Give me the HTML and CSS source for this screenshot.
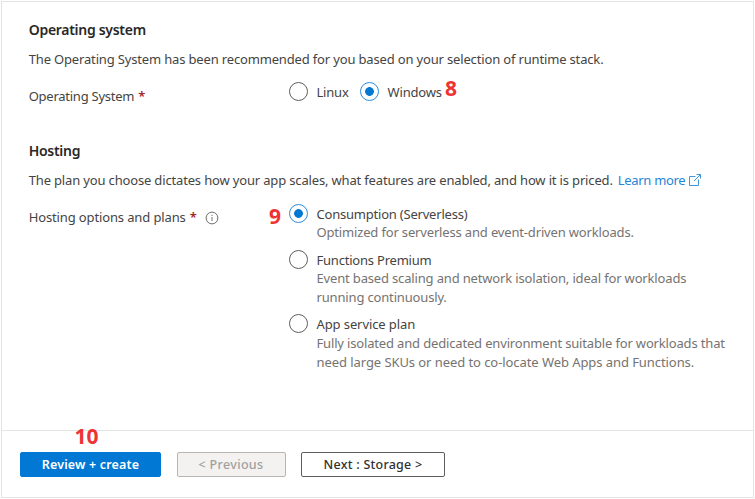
FILE: index.html
```
<!DOCTYPE html>
<html lang="en">
<head>
<meta charset="utf-8">
<title>Create Function App</title>
<link rel="stylesheet" href="styles.css">
</head>
<body>
<main class="panel">
  <div class="content">
    <section class="section section-os">
      <h2 class="heading">Operating system</h2>
      <p class="intro">The Operating System has been recommended for you based on your selection of runtime stack.</p>
      <div class="field">
        <div class="label os-label"><span class="label-text">Operating System</span><span class="required">*</span></div>
        <div class="radio-row">
          <div class="choice"><span class="radio"></span><span class="option">Linux</span></div>
          <div class="choice"><span class="radio checked"></span><span class="option">Windows</span><span class="step step-8">8</span></div>
        </div>
      </div>
    </section>
    <section class="section section-hosting">
      <h2 class="heading">Hosting</h2>
      <p class="intro"><span>The plan you choose dictates how your app scales, what features are enabled, and how it is priced.</span><a class="link"><span>Learn more</span><svg class="external" viewBox="0 0 12 12"><path d="M6.5 2.5h-6v9h9v-6M7.5.5h4v4M11.5.5l-6.5 6.5"/></svg></a></p>
      <div class="field">
        <div class="label host-label"><span class="label-text">Hosting options and plans</span><span class="required">*</span><svg class="info" viewBox="0 0 14 14"><circle cx="7" cy="7" r="5.9"/><path d="M7 6v4M7 3.8v1.2"/></svg></div>
        <div class="radio-list">
          <div class="choice plan"><span class="step step-9">9</span><span class="radio checked"></span><div class="plan-text"><div class="name">Consumption (Serverless)</div><div class="desc">Optimized for serverless and event-driven workloads.</div></div></div>
          <div class="choice plan"><span class="radio"></span><div class="plan-text"><div class="name">Functions Premium</div><div class="desc">Event based scaling and network isolation, ideal for workloads<br>running continuously.</div></div></div>
          <div class="choice plan"><span class="radio"></span><div class="plan-text"><div class="name app-name">App service plan</div><div class="desc">Fully isolated and dedicated environment suitable for workloads that<br><span class="sku-line">need large SKUs or need to co-locate Web Apps and Functions.</span></div></div></div>
        </div>
      </div>
    </section>
  </div>
  <footer class="footer">
    <button class="btn primary">Review + create<span class="step step-10">10</span></button>
    <button class="btn disabled" disabled>&lt; Previous</button>
    <button class="btn next">Next : Storage &gt;</button>
  </footer>
</main>
</body>
</html>
```
FILE: styles.css
```
* { box-sizing: border-box; }
body { margin: 0; background: #fff; font: 13px/19px "Noto Sans", sans-serif; letter-spacing: -0.16px; color: #454443; }
h2, p { margin: 0; }
.panel { display: flex; flex-direction: column; width: 753px; height: 497px; margin: 1px 0 0 1px; border: 1px solid #e4e4e4; }
.content { height: 428px; padding: 18px 0 0 26.7px; white-space: nowrap; }
.section-os { height: 121px; }
.heading { font-size: 14px; line-height: 20px; font-weight: 600; letter-spacing: -0.29px; color: #292827; }
.intro { display: flex; margin-top: 10px; }
.field { display: flex; }
.label { display: flex; width: 260.3px; }
.os-label { margin-top: 18px; }
.os-label .label-text { letter-spacing: -0.25px; }
.host-label { margin-top: 18px; }
.host-label .label-text { letter-spacing: -0.13px; }
.required { margin-left: 4px; color: #a4262c; font-weight: 600; }
.radio-row { display: flex; gap: 11.5px; margin-top: 13px; }
.choice { position: relative; display: flex; gap: 8.5px; }
.option { padding-top: 1px; letter-spacing: -0.2px; }
.radio { flex: none; width: 19px; height: 19px; border: 1px solid #605e5c; border-radius: 50%; }
.radio.checked { border-color: #2b8cdb; background: radial-gradient(circle, #0078d4 4px, transparent 4.7px); }
.radio-list { margin-top: 14px; }
.plan { height: 46px; }
.plan + .plan { height: 64px; }
.name { height: 19px; padding-top: 1px; letter-spacing: -0.21px; }
.app-name { height: 20px; letter-spacing: -0.1px; }
.desc { color: #757371; }
.sku-line { letter-spacing: -0.07px; }
.link { display: flex; margin-left: 5px; letter-spacing: -0.3px; color: #2486d9; }
.external { width: 12px; height: 12px; margin: 3px 0 0 4px; fill: none; stroke: #3f97de; }
.info { width: 14px; height: 14px; margin: 3px 0 0 8.5px; fill: none; stroke: #72706e; }
.step { position: absolute; color: #ee3333; font: 700 21px/20px "Noto Sans", sans-serif; letter-spacing: 0; }
.step-8 { left: 85px; top: -4px; }
.step-9 { left: -20px; top: 2px; }
.step-10 { left: 53.5px; top: -27px; }
.footer { display: flex; gap: 15.5px; flex: 1; border-top: 1px solid #e4e4e4; padding: 21px 0 0 18px; }
.btn { position: relative; width: 141px; height: 25px; padding: 0; border: 1px solid #0078d4; border-radius: 2px; background: #0078d4; color: #fff; font: 600 12.5px/22px "Noto Sans", sans-serif; letter-spacing: 0.17px; }
.disabled { width: 109px; border-color: #b8b6b4; background: #f3f2f1; color: #a19f9d; font-weight: 500; letter-spacing: 0.35px; }
.next { width: 144px; border-color: #605e5c; background: #fff; color: #323130; font-weight: 500; letter-spacing: 0.25px; }
```
